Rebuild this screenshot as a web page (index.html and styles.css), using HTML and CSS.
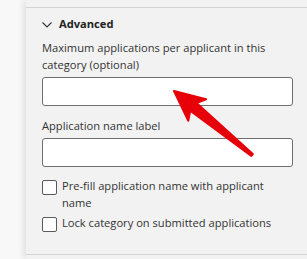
FILE: index.html
```html
<!DOCTYPE html>
<html lang="en">
<head>
<meta charset="utf-8">
<title>Advanced settings</title>
<link rel="stylesheet" href="styles.css">
</head>
<body>
<div class="page">
  <div class="gutter"></div>
  <div class="panel">
    <div class="section">
      <div class="section-head">
        <svg class="chevron" width="10" height="6" viewBox="0 0 10 6"><path d="M0.5 0.5 L5 5 L9.5 0.5" fill="none" stroke="#333" stroke-width="1.1"/></svg>
        <span class="section-title">Advanced</span>
      </div>
      <div class="field">
        <label class="field-label">Maximum applications per applicant in this category (optional)</label>
        <div class="text-input"></div>
      </div>
      <div class="field">
        <label class="field-label">Application name label</label>
        <div class="text-input"></div>
      </div>
      <div class="checks">
        <div class="check-row"><span class="checkbox"></span><span class="check-text">Pre-fill application name with applicant name</span></div>
        <div class="check-row"><span class="checkbox"></span><span class="check-text">Lock category on submitted applications</span></div>
      </div>
    </div>
  </div>
  <svg class="annotation" width="307" height="259" viewBox="0 0 307 259">
    <defs>
      <linearGradient id="ar" x1="174" y1="91" x2="252" y2="155" gradientUnits="userSpaceOnUse">
        <stop offset="0" stop-color="#e80008"/>
        <stop offset="1" stop-color="#e4000a"/>
      </linearGradient>
    </defs>
    <polygon points="174,91 206.1,99.2 196.5,103 252.8,154.1 251.3,156 190.2,110.7 188.3,120.8" fill="url(#ar)" stroke="#e60008" stroke-width="2" stroke-linejoin="round"/>
  </svg>
</div>
</body>
</html>
```
FILE: styles.css
```css
html, body {
  margin: 0;
  padding: 0;
}
body {
  font-family: "Open Sans", "Noto Sans", sans-serif;
  font-size: 11.15px;
  color: #333;
  background: #f8f8f8;
}
.page {
  position: relative;
  display: flex;
  width: 307px;
  height: 259px;
  overflow: hidden;
}
.gutter {
  width: 26px;
  flex: none;
  background: #f8f8f8;
}
.panel {
  flex: 1;
  background: #f2f2f2;
  box-shadow: -3px 0 6px rgba(0, 0, 0, 0.09);
  padding-top: 7px;
}
.section {
  border-top: 1px solid #d4d4d4;
  border-bottom: 1px solid #d4d4d4;
  padding: 7px 14px 22px 16px;
}
.section-head {
  display: flex;
  align-items: center;
  gap: 7px;
  height: 18px;
  line-height: 18px;
}
.chevron {
  display: block;
  margin-top: 1px;
}
.section-title {
  font-weight: 700;
  color: #222;
}
.field {
  display: flex;
  flex-direction: column;
  margin-top: 6px;
}
.field + .field {
  margin-top: 11px;
}
.field-label {
  line-height: 17px;
  margin-bottom: 4px;
}
.field:first-of-type .field-label {
  margin-bottom: 3px;
}
.text-input {
  height: 29px;
  box-sizing: border-box;
  border: 1px solid #6e6e6e;
  border-radius: 3px;
  background: #fff;
}
.checks {
  display: flex;
  flex-direction: column;
  gap: 3px;
  margin-top: 10px;
}
.check-row {
  display: flex;
  align-items: flex-start;
  gap: 5px;
  line-height: 17px;
}
.checkbox {
  flex: none;
  width: 15px;
  height: 15px;
  box-sizing: border-box;
  border: 1px solid #5a5a5a;
  border-radius: 2px;
  background: #fff;
  margin-top: 3px;
}
.annotation {
  position: absolute;
  left: 0;
  top: 0;
  pointer-events: none;
}
```
